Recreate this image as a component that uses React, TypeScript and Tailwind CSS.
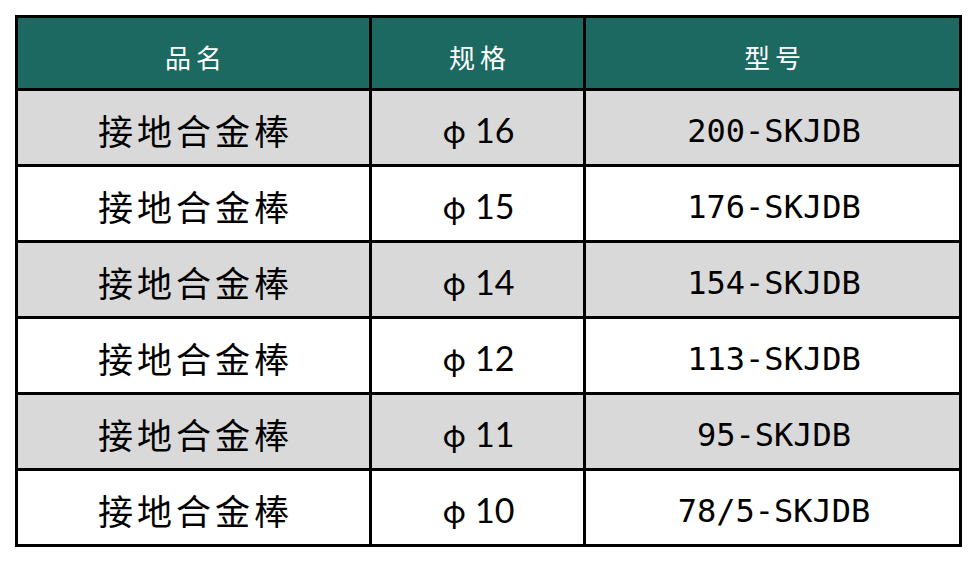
const rows = [
  { spec: "16", model: "200-SKJDB" },
  { spec: "15", model: "176-SKJDB" },
  { spec: "14", model: "154-SKJDB" },
  { spec: "12", model: "113-SKJDB" },
  { spec: "11", model: "95-SKJDB" },
  { spec: "10", model: "78/5-SKJDB" },
];

const cjk = "font-['Noto_Sans_CJK_SC',sans-serif]";

export default function App() {
  return (
    <div className="w-[978px] h-[564px] bg-white pt-[15px] pl-[15px]">
      <div className="inline-grid grid-cols-[351px_211px_373px] gap-[3px] bg-black p-[3px]">
        {["品名", "规格", "型号"].map((h) => (
          <div
            key={h}
            className={`h-[70px] bg-[#1b6961] text-white flex items-center justify-center pt-[6px] pl-[5px] text-[26px] tracking-[5px] ${cjk}`}
          >
            {h}
          </div>
        ))}
        {rows.map((r, i) => {
          const bg = i % 2 === 0 ? "bg-[#d9d9d9]" : "bg-white";
          return [
            <div
              key={`n${i}`}
              className={`h-[73px] ${bg} flex items-center justify-center pt-[6px] pl-[4px] text-[35px] tracking-[4px] text-black ${cjk}`}
            >
              接地合金棒
            </div>,
            <div
              key={`s${i}`}
              className={`h-[73px] ${bg} flex items-baseline justify-center pt-[13px] pl-[2px] text-black`}
            >
              <span className={`text-[31px] ${cjk}`}>φ</span>
              <span className="ml-[9px] text-[34px] font-['Lato',sans-serif]">{r.spec}</span>
            </div>,
            <div
              key={`m${i}`}
              className={`h-[73px] ${bg} flex items-center justify-center pt-[6px] pl-[3px] text-[32px] text-black font-['DejaVu_Sans_Mono',monospace]`}
            >
              {r.model}
            </div>,
          ];
        })}
      </div>
    </div>
  );
}
